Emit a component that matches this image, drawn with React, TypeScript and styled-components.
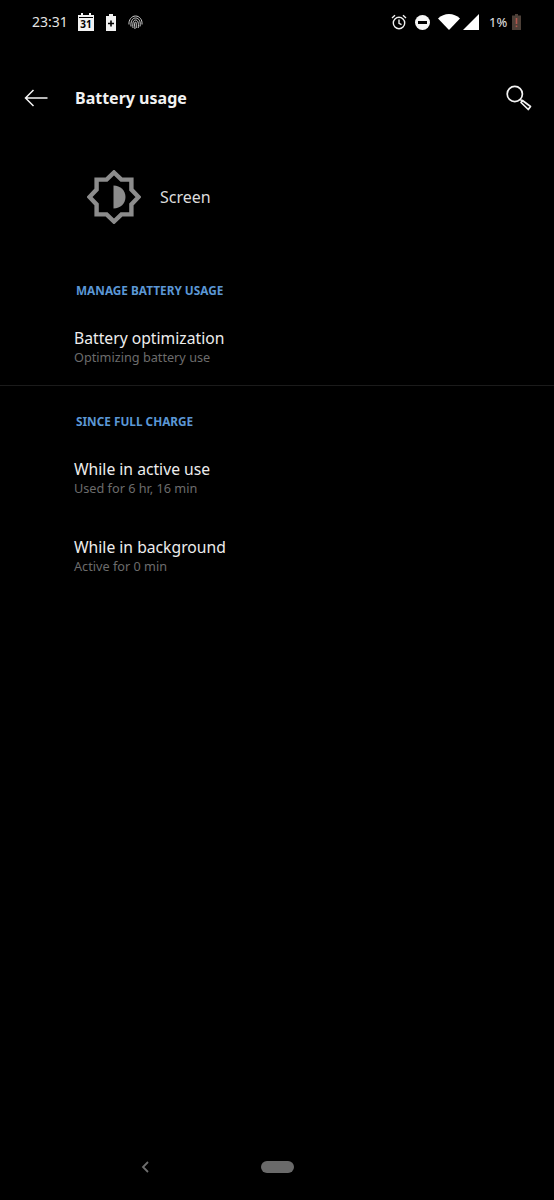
import styled, { createGlobalStyle } from 'styled-components';

const GlobalStyle = createGlobalStyle`
  html, body {
    margin: 0;
    padding: 0;
    background: #000;
  }
  * {
    box-sizing: border-box;
  }
`;

const App = () => {
  return (
    <>
      <GlobalStyle />
      <Page>
        <StatusBar>
          <StatusGroup>
            <Time>23:31</Time>
            <CalendarIcon>
              <svg width="16" height="18" viewBox="0 0 16 18">
                <path d="M0 2h3V0h2v2h6V0h2v2h3v16H0z" fill="#f2f2f2" />
                <rect x="1" y="4" width="14" height="1" fill="#000" />
              </svg>
              <CalendarDay>31</CalendarDay>
            </CalendarIcon>
            <svg width="10" height="17" viewBox="0 0 10 17">
              <path d="M3 0h4v2h3v15H0V2h3z" fill="#f2f2f2" />
              <path d="M4.2 6.5h1.6v2.2H8v1.6H5.8v2.2H4.2v-2.2H2V8.700h2.200z" fill="#000" />
            </svg>
            <svg width="15" height="15" viewBox="0 0 15 15" fill="none" stroke="#cfcfcf" strokeWidth="1">
              <path d="M1 9.500C.5 5 3.500 1 7.500 1s7 3.500 6.500 8.500" />
              <path d="M3 11.500C2.500 7 4 3 7.500 3s5.500 3.500 4.500 8.500" />
              <path d="M5 13C4.300 8.500 5.200 5 7.500 5s3.500 3 2.700 8" />
              <path d="M7.500 7c-1 0-1.200 3-.5 7M7.500 7c1 0 1 3 .700 6" />
            </svg>
          </StatusGroup>
          <StatusRight>
            <svg width="16" height="16" viewBox="0 0 16 16" fill="none" stroke="#f2f2f2" strokeWidth="1.400">
              <circle cx="8" cy="9" r="5.700" />
              <path d="M8 5.500V9.300l2.500 1.400M1 4l3-2.800M15 4l-3-2.800" />
            </svg>
            <DndIcon />
            <WifiIcon>
              <svg width="22" height="16" viewBox="0 0 22 16">
                <path d="M0 4.500C6-1.500 16-1.500 22 4.500L11 16z" fill="#fff" />
              </svg>
            </WifiIcon>
            <SignalIcon>
              <svg width="16" height="16" viewBox="0 0 16 16">
                <path d="M16 0v16H0z" fill="#fff" />
              </svg>
            </SignalIcon>
            <BatteryLevel>1%</BatteryLevel>
            <svg width="9" height="16" viewBox="0 0 9 16">
              <path d="M3 0h3v1.500h3V16H0V1.500h3z" fill="#4d4038" />
              <rect x="3.700" y="4" width="1.600" height="6" fill="#b0564c" />
              <rect x="3.700" y="11.500" width="1.600" height="1.600" fill="#b0564c" />
            </svg>
          </StatusRight>
        </StatusBar>

        <Header>
          <BackButton>
            <svg width="24" height="18" viewBox="0 0 24 18" fill="none" stroke="#f4f4f4" strokeWidth="1.500">
              <path d="M23.500 9H1.500M9.500 1 1.500 9l8 8" />
            </svg>
          </BackButton>
          <Title>Battery usage</Title>
          <svg width="26" height="26" viewBox="0 0 26 26" fill="none" stroke="#f4f4f4" strokeWidth="1.700">
            <circle cx="8.800" cy="9" r="7.600" />
            <path d="M14.500 14.500 16.500 16.500M16.500 15.500 24.500 21.500 22.300 24.500 15 17.500z" strokeLinejoin="round" />
          </svg>
        </Header>

        <AppRow>
          <svg width="54" height="54" viewBox="0 0 54 54">
            <path
              d="M27 2.500 34.400 9.600H44.400V19.600L51.500 27 44.400 34.400V44.400H34.400L27 51.500 19.600 44.400H9.600V34.400L2.500 27 9.600 19.600V9.600H19.600z"
              fill="none"
              stroke="#8c8c8c"
              strokeWidth="4.400"
            />
            <path d="M26.500 15.500c7 0 12 5 12 11.500s-5 11.500-12 11.500z" fill="#8c8c8c" />
          </svg>
          <AppName>Screen</AppName>
        </AppRow>

        <SectionLabel $top={58}>MANAGE BATTERY USAGE</SectionLabel>
        <SettingRow $top={30} title="Battery optimization" summary="Optimizing battery use" />
        <Divider />
        <SectionLabel $top={27}>SINCE FULL CHARGE</SectionLabel>
        <SettingRow $top={30} title="While in active use" summary="Used for 6 hr, 16 min" />
        <SettingRow $top={40} title="While in background" summary="Active for 0 min" />

        <NavBar>
          <svg width="10" height="14" viewBox="0 0 10 14" fill="none" stroke="#6e6e6e" strokeWidth="1.800">
            <path d="M8 2 3 7l5 5" />
          </svg>
          <HomePill />
        </NavBar>
      </Page>
    </>
  );
};

export default App;

interface SettingRowProps {
  title: string;
  summary: string;
  $top: number;
}

const SettingRow = ({ title, summary, $top }: SettingRowProps) => (
  <Row $top={$top}>
    <RowTitle>{title}</RowTitle>
    <RowSummary>{summary}</RowSummary>
  </Row>
);

const Page = styled.div`
  width: 554px;
  height: 1200px;
  display: flex;
  flex-direction: column;
  background: #000;
  font-family: 'Noto Sans', 'Open Sans', sans-serif;
  overflow: hidden;
`;

const StatusBar = styled.div`
  height: 44px;
  padding: 0 33px 0 32px;
  display: flex;
  align-items: center;
  justify-content: space-between;
`;

const StatusGroup = styled.div`
  display: flex;
  align-items: center;
  gap: 12px;
`;

const StatusRight = styled.div`
  display: flex;
  align-items: center;
  gap: 8.500px;
`;

const Time = styled.span`
  width: 34px;
  color: #e4e4e4;
  font-size: 14px;
  line-height: 18px;
`;

const CalendarIcon = styled.div`
  position: relative;
  width: 16px;
  height: 18px;
`;

const CalendarDay = styled.span`
  position: absolute;
  left: 0;
  right: 0;
  bottom: 1px;
  color: #000;
  font-size: 10px;
  font-weight: 700;
  line-height: 11px;
  text-align: center;
`;

const DndIcon = styled.div`
  position: relative;
  width: 15px;
  height: 15px;
  border-radius: 50%;
  background: #f6f6f6;

  &::after {
    content: '';
    position: absolute;
    top: 6px;
    left: 3px;
    width: 9px;
    height: 3px;
    background: #000;
  }
`;

const WifiIcon = styled.div`
  margin-left: -1px;
  height: 16px;
  line-height: 0;
`;

const SignalIcon = styled.div`
  margin-left: -5px;
  height: 16px;
  line-height: 0;
`;

const BatteryLevel = styled.span`
  width: 18px;
  margin: 0 -3.500px 0 1.500px;
  color: #e4e4e4;
  font-size: 13px;
  line-height: 18px;
`;

const Header = styled.div`
  margin-top: 29px;
  height: 50px;
  padding: 0 22px 0 24px;
  display: flex;
  align-items: center;
`;

const BackButton = styled.div`
  width: 51px;
  line-height: 0;
`;

const Title = styled.h1`
  flex: 1;
  margin: 0;
  color: #f2f2f2;
  font-size: 16px;
  font-weight: 700;
`;

const AppRow = styled.div`
  margin-top: 47px;
  padding-left: 87px;
  display: flex;
  align-items: center;
  gap: 19px;
`;

const AppName = styled.span`
  color: #dcdcdc;
  font-size: 16px;
`;

const SectionLabel = styled.div<{ $top: number }>`
  margin-top: ${({ $top }) => $top}px;
  padding-left: 76px;
  color: #5b97d5;
  font-size: 11.800px;
  font-weight: 700;
  line-height: 16px;
`;

const Row = styled.div<{ $top: number }>`
  margin-top: ${({ $top }) => $top}px;
  padding-left: 74px;
`;

const RowTitle = styled.div`
  color: #ededed;
  font-size: 15.700px;
  line-height: 21px;
`;

const RowSummary = styled.div`
  color: #6c6c6c;
  font-size: 12.700px;
  line-height: 17px;
`;

const Divider = styled.div`
  margin-top: 19px;
  height: 1px;
  background: #1b1b1b;
`;

const NavBar = styled.div`
  margin-top: auto;
  height: 66px;
  padding-left: 140px;
  display: flex;
  align-items: center;
  gap: 111px;
`;

const HomePill = styled.div`
  width: 33px;
  height: 12px;
  border-radius: 6px;
  background: #6a6a6a;
`;
